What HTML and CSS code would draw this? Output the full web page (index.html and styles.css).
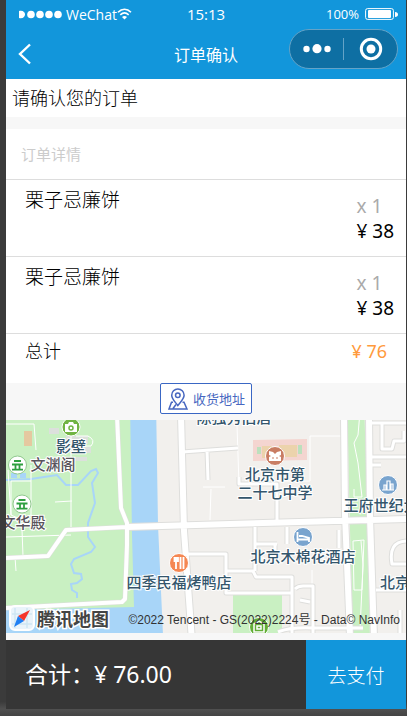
FILE: index.html
```html
<!DOCTYPE html>
<html lang="zh-CN">
<head>
<meta charset="utf-8">
<meta name="viewport" content="width=device-width, initial-scale=1">
<title>订单确认</title>
<link rel="stylesheet" href="styles.css">
</head>
<body>
<div class="phone">
  <header class="header">
    <div class="status">
      <div class="carrier">
        <svg class="signal" viewBox="0 0 43 9" aria-hidden="true"><path d="M0 1c8-2 8 9 0 7z"/><circle cx="12" cy="4.500" r="3.800"/><circle cx="21" cy="4.500" r="3.800"/><circle cx="30" cy="4.500" r="3.800"/><circle cx="39" cy="4.500" r="3.800"/></svg>
        <span>WeChat</span>
        <svg class="wifi" viewBox="0 0 15 12" aria-hidden="true"><path d="M1 4.300C5 .3 10 .3 14 4.300M3.300 6.800c2.600-2.400 5.800-2.400 8.400 0" fill="none" stroke="#fff" stroke-width="1.600"/><path d="M5 9c1.500-1.400 3.500-1.400 5 0l-2.500 2.600z" fill="#fff"/></svg>
      </div>
      <time>15:13</time>
      <div class="power">
        <span>100%</span>
        <svg class="battery" viewBox="0 0 33 12" aria-hidden="true"><rect x=".6" y=".6" width="27.800" height="10.800" rx="2" fill="none" stroke="#fff"/><rect x="3" y="2" width="23" height="8" rx="1" fill="#fff"/><path d="M30 4c4 0 4 5 0 5z" fill="#fff"/></svg>
      </div>
    </div>
    <div class="nav">
      <button class="back" aria-label="返回"><svg viewBox="0 0 14 22"><path d="M12 1.500 2 11l10 9.500" fill="none" stroke="#fff" stroke-width="2.400"/></svg></button>
      <h1>订单确认</h1>
      <div class="capsule">
        <button aria-label="更多"><svg class="dots" viewBox="0 0 28 10"><circle cx="3.500" cy="5" r="3.200"/><circle cx="14" cy="4.700" r="4.600"/><circle cx="24.500" cy="5" r="3.200"/></svg></button>
        <button aria-label="关闭"><svg class="target" viewBox="0 0 24 24"><circle cx="12" cy="12" r="9.700" fill="none" stroke="#fff" stroke-width="3"/><circle cx="12" cy="12" r="4.500" fill="#fff"/></svg></button>
      </div>
    </div>
  </header>
  <main>
    <h2 class="prompt">请确认您的订单</h2>
    <section class="order">
      <h3>订单详情</h3>
      <ul>
        <li><span class="name">栗子忌廉饼</span><div class="amount"><span class="qty">x 1</span><span>¥ 38</span></div></li>
        <li><span class="name">栗子忌廉饼</span><div class="amount"><span class="qty">x 1</span><span>¥ 38</span></div></li>
      </ul>
      <div class="total"><span>总计</span><span class="sum">¥ 76</span></div>
    </section>
    <div class="address">
      <button><svg viewBox="0 0 20 22" aria-hidden="true"><path d="M9.800 17.500C7 13.700 3.700 10.800 3.700 7.200a6.200 6.200 0 0 1 12.400 0c0 3.600-3.400 6.500-6.300 10.300z"/><circle cx="9.800" cy="7.200" r="2.300"/><path d="M5 14.300H3.500L1 21h18l-3-6.700h-1.500M5 20.500l3-4"/></svg>收货地址</button>
    </div>
    <div class="map">
      <svg class="tiles" viewBox="6 420 400 213" preserveAspectRatio="xMidYMid slice" role="img" aria-label="地图">
        <defs>
          <path id="avenues" d="M181 415l3 116 8 110M344 415l1 100 5 121M369 415l1 102 4 120M127 527l279-8"/>
          <path id="roads" d="M117 415l4 93 6 15v22l-2 54-3 3-116 6M6 558l42-2 18-26 61-3"/>
          <path id="streets" d="M182 452l56-4M207 450l1 30M239 477v7h38v40M370 457h36M371 423h35M382 423v26h10l2-8h10v-10M371 465h10M186 554h40v17h27l3 6h36v62M255 527v44M287 527v17M275 544v7M226 571v22h66M295 589q3-3 8-3h10v50M300 600l10 2M406 541q-18 1-14 23h14M376 590h30M339 530v18M400 610v24M255 544h22M278 632q12-5 35-4h50"/>
        </defs>
        <rect x="-200" y="400" width="900" height="260" fill="#f2f0ed"/>
        <path d="M-200 400H131l4 240H-200z" fill="#c9f0c2"/>
        <path d="M130 400h26l2 125 5 110H6v-25l128-3-2-72z" fill="#a8d5f8"/>
        <path d="M347 400h17l4 130 2 110h-17l-3-110zM233 594h49v42h-49z" fill="#c9f0c2"/>
        <path d="M253 440l54-1v21l-54 1z" fill="#f4d5d0"/>
        <path d="M262 446h10v12h-10zm17-1h18v12h-18z" fill="#ecd3ac"/>
        <path d="M257 447h4v7h-4zm41-2h4v9h-4z" fill="#bce0bd"/>
        <path d="M24 431h8v15h-8z" fill="#e5c8a0"/>
        <path d="M49 428h10v6H49zm17 8h22v8H66zm-7 11h32v6H59zm8 10h20v4H67z" fill="#dce0dc"/>
        <path d="M11 473h6v5h-6zm9 0h6v5h-6z" fill="#a8d5f8"/>
        <path d="M6 480l25-1 26-4 9 10h12l13-14 5-2 2 4-6 10 3 20-7 20v14l7 10-4 5-17 7-3 5 3 9 7 1 1 5-5 4-6 1 1 6 5 3v5" fill="none" stroke="#a8d5f8" stroke-width="2"/>
        <path class="lane" d="M6 424h28l2 26M71 435v92M8 470l3 45M31 465v50q-10 6-20 0V481h20M55 502l17-1M6 537l65-2M22 530l1 26M15 557l1 14M76 436h12q8 4 3 10H76M237 425l2 60M310 436h35M310 436v45h-38M203 487h22M211 489l-1 31M361 400l-3 35-4 8 4 20 4 34h-8v-8M353 541l11-1-2 50h-8zM361 541l2 24-3 65M312 570v30"/>
        <g class="edge"><use href="#streets" stroke-width="5"/><use href="#roads" stroke-width="5"/><use href="#avenues" stroke-width="8"/></g>
        <g class="surface"><use href="#streets" stroke-width="3"/><use href="#roads" stroke-width="4"/><use href="#avenues" stroke-width="6"/></g>
        <g stroke="#fff" stroke-width="1">
          <circle cx="71" cy="427" r="9" fill="#70b443"/>
          <circle cx="17.500" cy="465" r="9" fill="#fff" stroke="#92c890"/>
          <circle cx="22" cy="504" r="9" fill="#fff" stroke="#92c890"/>
          <circle cx="275" cy="456" r="9.500" fill="#c97d63"/>
          <circle cx="388" cy="485" r="9.500" fill="#79a4ce"/>
          <circle cx="303" cy="537" r="9.500" fill="#79a4ce"/>
          <circle cx="179" cy="563" r="9.500" fill="#f58752"/>
          <circle cx="259" cy="627" r="9.500" fill="#62ae35"/>
        </g>
        <path d="M65 424h3l1-2h4l1 2h3v8H65z" fill="#fff"/><circle cx="71" cy="428" r="2" fill="none" stroke="#70b443" stroke-width="1.500"/>
        <g fill="none" stroke="#2f9f40" stroke-width="1.800"><path d="M14 461h7M12 464.500h11M15.500 465v4.500M19.500 465v4.500M12 469.700h11"/><path d="M18.500 500h7M16.500 503.500h11M20 504v4.500M24 504v4.500M16.500 508.700h11"/></g>
        <path d="M269 451l4 1 2 2 2-2 4-1v4l-2 1 2 1v4h-12v-4l2-1-2-1z" fill="#fff"/><path d="M272 458h2m2 0h2" stroke="#c97d63"/>
        <path d="M382 490h12M384 490v-5h2v5m1 0v-9h3v9m1 0v-6h2v6" fill="none" stroke="#fff" stroke-width="1.200"/>
        <path d="M297.500 532v10M297.500 539.500h12M309 542v-4l-7-2h-3" fill="none" stroke="#fff" stroke-width="1.800"/>
        <path d="M176 562v7M174.500 557v4h3.500v-4M176.200 557v4M180.500 557v12M183.500 557v12" fill="none" stroke="#fff" stroke-width="1.800"/>
        <path d="M254 624l5-3 5 3v8h-10zM257 626h4v3h-4z" fill="none" stroke="#fff" stroke-width="1.500"/>
        <g class="labels">
          <text x="71" y="452">影壁</text>
          <text class="gray" x="53" y="470">文渊阁</text>
          <text class="gray" x="23" y="528">文华殿</text>
          <text x="234" y="423">陈独秀旧居</text>
          <text x="275" y="480">北京市第</text>
          <text x="275" y="498">二十七中学</text>
          <text x="381" y="511">王府世纪大</text>
          <text x="303" y="562">北京木棉花酒店</text>
          <text x="179" y="588">四季民福烤鸭店</text>
          <text x="410" y="588">北京饭店</text>
        </g>
      </svg>
      <div class="credit">
        <svg viewBox="0 0 26 26" aria-hidden="true"><rect x="1" y="1" width="24" height="24" rx="5" fill="#eaf4fb" stroke="#fff" stroke-width="2"/><path d="M6 3v20M3 9h20M18 3v20M3 19h20" stroke="#cfe6f4" stroke-width="1.500"/><path d="M21 5 9 11l6 5z" fill="#f5352b"/><path d="M9 11 5 22l10-6z" fill="#2180f3"/></svg>
        <strong>腾讯地图</strong>
        <small>©2022 Tencent - GS(2022)2224号 - Data© NavInfo</small>
      </div>
    </div>
  </main>
  <footer class="checkout">
    <p>合计：¥ 76.00</p>
    <button>去支付</button>
  </footer>
</div>
</body>
</html>
```
FILE: styles.css
```css
* { box-sizing: border-box; }

body {
  margin: 0;
  padding: 0 1px 7px 6px;
  min-height: 100vh;
  display: flex;
  background: linear-gradient(#3b3b3b, #3b3b3b 98%, #505050 99%, #444);
  font-family: "Noto Sans", "Noto Sans CJK SC", sans-serif;
  color: #000;
}

h1, h2, h3, p, ul { margin: 0; padding: 0; font-weight: 400; }
ul { list-style: none; }
button { border: 0; padding: 0; background: none; color: inherit; font: inherit; }
svg { display: block; }

.phone {
  flex: 1;
  min-width: 0;
  display: flex;
  flex-direction: column;
  background: #f7f7f7;
}
main { flex: 1; }

.header { background: #1296db; color: #fff; }
.status {
  display: grid;
  grid-template-columns: 1fr auto 1fr;
  align-items: center;
  height: 28px;
  padding: 0 8px;
  font-family: "Open Sans", sans-serif;
  font-size: 15px;
}
.carrier, .power { display: flex; align-items: center; }
.carrier { padding-left: 5px; font-size: 14px; }
.signal { width: 43px; height: 9px; margin-right: 4px; fill: #fff; }
.wifi { width: 15px; height: 12px; }
.power { justify-content: flex-end; gap: 6px; font-size: 13px; }
.battery { width: 33px; height: 12px; }

.nav {
  display: grid;
  grid-template-columns: 1fr auto 1fr;
  align-items: center;
  height: 51px;
  padding: 0 8px;
}
.nav h1 { font-size: 16px; }
.back { justify-self: start; padding-left: 4px; }
.back svg { width: 14px; height: 22px; }
.capsule {
  justify-self: end;
  display: flex;
  align-items: center;
  width: 109px;
  height: 40px;
  margin-bottom: 9px;
  border: 1px solid #64a3c7;
  border-radius: 20px;
  background: #0e6fa3;
}
.capsule button { flex: 1; display: flex; align-items: center; justify-content: center; height: 22px; }
.capsule button + button { border-left: 1px solid #64a3c7; }
.dots { width: 28px; height: 10px; fill: #fff; }
.target { width: 24px; height: 24px; }

.prompt {
  padding: 0 6px;
  background: #fff;
  font-size: 18px;
  line-height: 38px;
}
.prompt, .name, .total, .checkout button { font-weight: 300; }
.order { margin-top: 12px; background: #fff; }
.order h3 {
  padding-left: 15px;
  color: #ccc;
  font-size: 15px;
  line-height: 50px;
}
.order li {
  display: flex;
  justify-content: space-between;
  padding: 8px 12px 12px 19px;
  border-top: 1px solid #ddd;
  font-size: 19px;
  line-height: 25px;
}
.amount { display: flex; flex-direction: column; padding-top: 6px; }
.qty { color: #aaa; }
.total {
  display: flex;
  justify-content: space-between;
  height: 50px;
  padding: 0 19px;
  border-top: 1px solid #ddd;
  font-size: 18px;
  line-height: 34px;
}
.sum { color: #ff9a3c; font-weight: 400; }

.address { display: flex; justify-content: center; padding-bottom: 6px; }
.address button {
  display: flex;
  align-items: center;
  gap: 5px;
  height: 31px;
  padding: 0 6px 0 7px;
  border: 1px solid #3a67c4;
  border-radius: 2px;
  background: #fff;
  color: #4767c0;
  font-size: 13px;
}
.address svg { width: 20px; height: 22px; fill: none; stroke: #4767c0; stroke-width: 1.5; }

.map { position: relative; height: 213px; overflow: hidden; }
.tiles { width: 100%; height: 100%; }
.lane, .edge, .surface { fill: none; stroke: #fff; stroke-linejoin: round; }
.lane { stroke-width: 1; }
.edge { stroke: #dededc; }
.labels {
  fill: #34566c;
  stroke: #fff;
  stroke-width: 2;
  paint-order: stroke;
  text-anchor: middle;
  font-size: 15px;
  font-weight: 500;
}
.labels .gray { fill: #58545c; }

.credit {
  position: absolute;
  left: 3px;
  right: 6px;
  bottom: 1px;
  display: flex;
  align-items: center;
  height: 28px;
  white-space: nowrap;
}
.credit svg { width: 26px; height: 26px; }
.credit strong {
  margin-left: 2px;
  color: #444;
  font-size: 18px;
  -webkit-text-stroke: 3px #fff;
  paint-order: stroke;
}
.credit small {
  margin-left: auto;
  color: #333;
  font-family: "Liberation Sans", "Noto Sans CJK SC", sans-serif;
  font-size: 12px;
}

.checkout {
  display: flex;
  height: 69px;
  background: #363636;
  color: #fff;
}
.checkout p {
  flex: 1;
  padding-left: 19px;
  font-size: 23px;
  line-height: 69px;
}
.checkout button { width: 25%; background: #1296db; font-size: 19px; }
```
